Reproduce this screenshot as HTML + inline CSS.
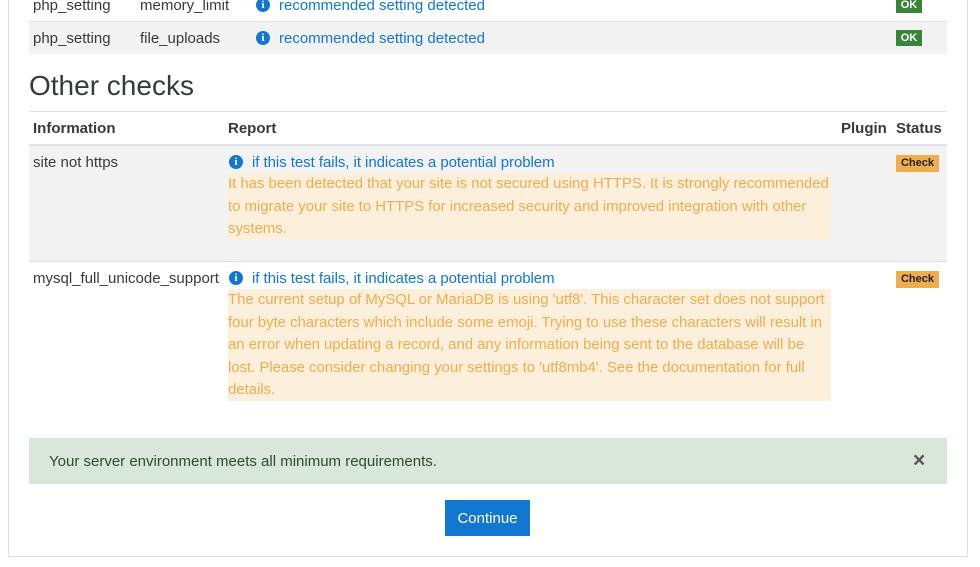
<!DOCTYPE html>
<html><head><style>
body{margin:0;width:980px;height:567px;background:#fff;font-family:"Liberation Sans",sans-serif;font-size:15px;color:#373a3c;position:relative;overflow:hidden}
.a{position:absolute;white-space:nowrap}
.box{position:absolute;left:8px;top:-10px;width:960px;height:567px;border:1px solid #dedede;border-top:none;box-sizing:border-box}
.link{color:#1177d1}
.ic{position:absolute;width:14px;height:14px;border-radius:50%;background:#1177d1;color:#fff;font:bold 11px/14px "Liberation Serif",serif;text-align:center}
.ok{position:absolute;left:896px;width:26px;height:16px;background:#398439;color:#fff;font:bold 11px/16px "Liberation Sans",sans-serif;text-align:center}
.ck{position:absolute;left:896px;width:43px;height:17px;background:#f0ad4e;color:#222;font:bold 11px/17px "Liberation Sans",sans-serif;text-align:center}
.warn{position:absolute;left:228px;width:603px;background:#fcefdc;color:#f0ad4e;line-height:22.5px;white-space:nowrap;letter-spacing:-0.05px}
.hr{position:absolute;left:29px;width:918px;height:1px;background:#dee2e6}
</style></head><body>
<div class="box"></div>
<div class="hr" style="top:21px"></div>
<div class="a" style="left:29px;top:22px;width:918px;height:32px;background:#f2f2f2"></div>
<div class="a" style="left:33px;top:-3px">php_setting</div>
<div class="a" style="left:140px;top:-3px">memory_limit</div>
<div class="ic" style="left:256px;top:-2px">i</div>
<div class="a link" style="left:279px;top:-3px">recommended setting detected</div>
<div class="ok" style="top:-3px">OK</div>
<div class="a" style="left:33px;top:30px">php_setting</div>
<div class="a" style="left:140px;top:30px">file_uploads</div>
<div class="ic" style="left:256px;top:31px">i</div>
<div class="a link" style="left:279px;top:30px">recommended setting detected</div>
<div class="ok" style="top:30px">OK</div>
<div class="a" style="left:29px;top:70px;font-size:28px;color:#373a3c">Other checks</div>
<div class="hr" style="top:111px"></div>
<div class="a" style="left:33px;top:120px;font-weight:bold">Information</div>
<div class="a" style="left:228px;top:120px;font-weight:bold">Report</div>
<div class="a" style="left:841px;top:120px;font-weight:bold">Plugin</div>
<div class="a" style="left:896px;top:120px;font-weight:bold">Status</div>
<div class="hr" style="top:144px;height:2px"></div>
<div class="a" style="left:29px;top:146px;width:918px;height:115px;background:#f2f2f2"></div>
<div class="a" style="left:33px;top:154px">site not https</div>
<div class="ic" style="left:229px;top:155px">i</div>
<div class="a link" style="left:252px;top:154px;letter-spacing:-0.05px">if this test fails, it indicates a potential problem</div>
<div class="ck" style="top:155px">Check</div>
<div class="warn" style="top:173px;height:67px">It has been detected that your site is not secured using HTTPS. It is strongly recommended<br>to migrate your site to HTTPS for increased security and improved integration with other<br>systems.</div>
<div class="hr" style="top:261px"></div>
<div class="a" style="left:33px;top:270px">mysql_full_unicode_support</div>
<div class="ic" style="left:229px;top:271px">i</div>
<div class="a link" style="left:252px;top:270px;letter-spacing:-0.05px">if this test fails, it indicates a potential problem</div>
<div class="ck" style="top:271px">Check</div>
<div class="warn" style="top:289px;height:112px">The current setup of MySQL or MariaDB is using 'utf8'. This character set does not support<br>four byte characters which include some emoji. Trying to use these characters will result in<br>an error when updating a record, and any information being sent to the database will be<br>lost. Please consider changing your settings to 'utf8mb4'. See the documentation for full<br>details.</div>
<div class="a" style="left:29px;top:438px;width:918px;height:46px;background:#d9e6da"></div>
<div class="a" style="left:49px;top:453px;color:#2f4a30">Your server environment meets all minimum requirements.</div>
<div class="a" style="left:913px;top:449px;color:#555;font-weight:bold;font-size:21px">×</div>
<div class="a" style="left:445px;top:500px;width:85px;height:36px;background:#1177d1;color:#fff;text-align:center;line-height:37px">Continue</div>
</body></html>
